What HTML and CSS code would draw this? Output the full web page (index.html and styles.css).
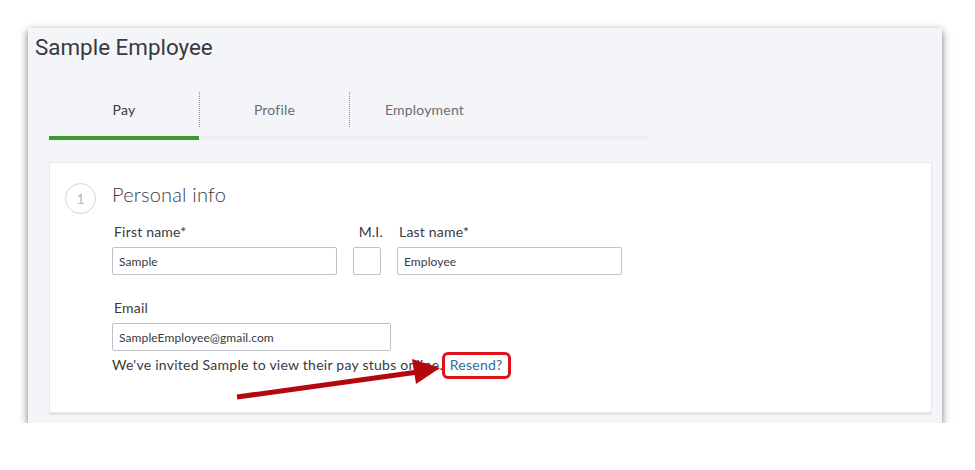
FILE: index.html
```html
<!DOCTYPE html>
<html lang="en">
  <head>
    <meta charset="UTF-8" />
    <meta name="viewport" content="width=device-width, initial-scale=1.0" />
    <title>Sample Employee</title>
    <link rel="stylesheet" href="styles.css">
  </head>
  <body>
    <div class="panel">
      <h1 class="title">Sample Employee</h1>
      <div class="tabs">
        <div class="tab active"><span>Pay</span></div>
        <div class="tab"><span>Profile</span></div>
        <div class="tab"><span>Employment</span></div>
      </div>
      <div class="card">
        <div class="step">1</div>
        <div class="stepBody">
          <h2>Personal info</h2>
          <div class="nameRow">
            <div class="field">
              <label>First name*</label>
              <input type="text" class="wide" value="Sample" />
            </div>
            <div class="field mi">
              <label>M.I.</label>
              <input type="text" class="small" value="" />
            </div>
            <div class="field">
              <label>Last name*</label>
              <input type="text" class="wide" value="Employee" />
            </div>
          </div>
          <div class="field emailField">
            <label>Email</label>
            <input type="text" class="email" value="SampleEmployee@gmail.com" />
          </div>
          <p class="note">
            We've invited Sample to view their pay stubs online.
            <a class="resend">Resend?</a>
          </p>
        </div>
        <svg class="arrow" viewBox="230 355 220 47" width="220" height="47">
          <line x1="237" y1="397" x2="418" y2="372" stroke="#b5080c" stroke-width="5" />
          <polygon points="440,368 412,359 416,384" fill="#b5080c" />
        </svg>
      </div>
    </div>
  </body>
</html>
```

FILE: styles.css
```css
* {
  margin: 0;
  padding: 0;
  box-sizing: border-box;
}
body {
  background-color: #ffffff;
  font-family: "Lato", "Open Sans", sans-serif;
  color: #393a3d;
  padding: 28px 33px 0 28px;
}
.panel {
  background-color: #f4f5f8;
  height: 395px;
  padding: 5px 10px 9px 7px;
  box-shadow: 0 3px 8px rgba(0, 0, 0, 0.55);
}
.title {
  font-family: "Roboto", sans-serif;
  font-weight: 400;
  font-size: 22.4px;
  line-height: 28px;
  color: #393a3d;
}
.tabs {
  display: flex;
  width: 599px;
  margin: 31px 0 0 14px;
  border-bottom: 4px solid #eeeff2;
}
.tab {
  width: 150px;
  padding-bottom: 9px;
  border-bottom: 4px solid transparent;
  margin-bottom: -4px;
  font-size: 14px;
  letter-spacing: 0.2px;
  color: #6b6c72;
  text-align: center;
}
.tab span {
  display: block;
  height: 35px;
  line-height: 35px;
}
.tab + .tab span {
  border-left: 1px dotted #8d9096;
}
.tab.active {
  border-bottom-color: #3d9a32;
  color: #393a3d;
}
.card {
  position: relative;
  display: flex;
  margin: 22px 0 0 14px;
  background-color: #ffffff;
  border: 1px solid #e7e8ec;
  border-bottom: 3px solid #e3e4e9;
  padding: 19px 0 37px 15px;
}
.step {
  width: 31px;
  height: 31px;
  margin-top: 1px;
  border: 1px solid #d3d6db;
  border-radius: 50%;
  color: #b4b7bc;
  font-size: 14px;
  line-height: 29px;
  text-align: center;
}
.stepBody {
  margin-left: 16px;
}
.stepBody h2 {
  font-size: 20px;
  font-weight: 300;
  line-height: 24px;
  letter-spacing: 0.2px;
  color: #393a3d;
  margin-bottom: 17px;
}
.nameRow {
  display: flex;
  gap: 16px;
}
.field label {
  display: block;
  font-size: 14px;
  line-height: 18px;
  letter-spacing: 0.2px;
  margin-bottom: 6px;
  padding-left: 2px;
}
.field.mi label {
  text-align: right;
  padding-left: 0;
  margin-right: -2px;
}
.field input {
  display: block;
  height: 28px;
  border: 1px solid #bfc2c8;
  border-radius: 2px;
  padding: 0 6px;
  font-family: "Lato", "Open Sans", sans-serif;
  font-size: 12px;
  letter-spacing: 0.1px;
  color: #393a3d;
  outline: none;
}
.wide {
  width: 225px;
}
.small {
  width: 28px;
}
.email {
  width: 279px;
}
.emailField {
  margin-top: 24px;
}
.note {
  margin-top: 4px;
  font-size: 14px;
  line-height: 20px;
  letter-spacing: 0.25px;
}
.resend {
  position: relative;
  color: #2f6f98;
  margin-left: 3px;
}
.resend::after {
  content: "";
  position: absolute;
  left: -8px;
  right: -8px;
  top: -4px;
  bottom: -6px;
  border: 3px solid #dd1219;
  border-radius: 6px;
}
.arrow {
  position: absolute;
  left: 180px;
  top: 192px;
}
```
